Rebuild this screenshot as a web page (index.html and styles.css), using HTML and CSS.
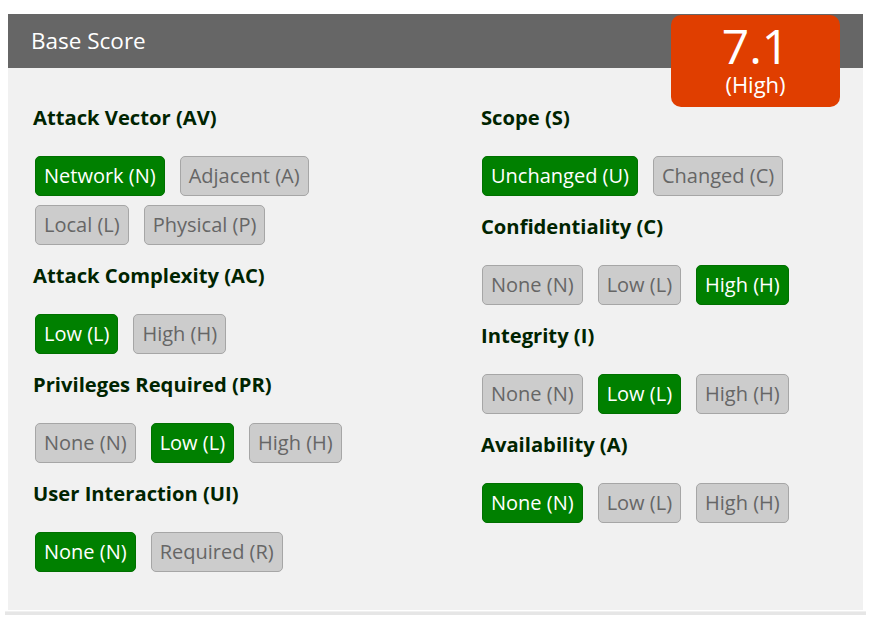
FILE: index.html
```html
<!DOCTYPE html>
<html>
<head>
<meta charset="utf-8">
<link rel="stylesheet" href="styles.css">
</head>
<body>
<div class="panel">
  <div class="header">Base Score</div>
  <div class="badge"><div class="score">7.1</div><div class="sev">(High)</div></div>
  <div class="body">
    <div class="col">
      <div class="metric">
        <h3>Attack Vector (AV)</h3>
        <div class="opts">
          <span class="btn on">Network (N)</span><span class="btn">Adjacent (A)</span><span class="btn">Local (L)</span><span class="btn">Physical (P)</span>
        </div>
      </div>
      <div class="metric">
        <h3>Attack Complexity (AC)</h3>
        <div class="opts"><span class="btn on">Low (L)</span><span class="btn">High (H)</span></div>
      </div>
      <div class="metric">
        <h3>Privileges Required (PR)</h3>
        <div class="opts"><span class="btn">None (N)</span><span class="btn on">Low (L)</span><span class="btn">High (H)</span></div>
      </div>
      <div class="metric">
        <h3>User Interaction (UI)</h3>
        <div class="opts"><span class="btn on">None (N)</span><span class="btn">Required (R)</span></div>
      </div>
    </div>
    <div class="col col-right">
      <div class="metric">
        <h3>Scope (S)</h3>
        <div class="opts"><span class="btn on">Unchanged (U)</span><span class="btn">Changed (C)</span></div>
      </div>
      <div class="metric">
        <h3>Confidentiality (C)</h3>
        <div class="opts"><span class="btn">None (N)</span><span class="btn">Low (L)</span><span class="btn on">High (H)</span></div>
      </div>
      <div class="metric">
        <h3>Integrity (I)</h3>
        <div class="opts"><span class="btn">None (N)</span><span class="btn on">Low (L)</span><span class="btn">High (H)</span></div>
      </div>
      <div class="metric">
        <h3>Availability (A)</h3>
        <div class="opts"><span class="btn on">None (N)</span><span class="btn">Low (L)</span><span class="btn">High (H)</span></div>
      </div>
    </div>
  </div>
</div>
<div class="rule"></div>
</body>
</html>
```

FILE: styles.css
```css
html, body {
  margin: 0;
  padding: 0;
  background: #fff;
  font-family: "Open Sans", "Liberation Sans", sans-serif;
}
body {
  padding-top: 14px;
}
.panel {
  position: relative;
  margin: 0 17px 0 8px;
  background: #f1f1f1;
}
.header {
  height: 54px;
  line-height: 54px;
  background: #666;
  color: #fff;
  font-size: 22.5px;
  padding-left: 23px;
}
.badge {
  position: absolute;
  top: 1px;
  right: 23px;
  width: 169px;
  height: 92px;
  background: #e03e00;
  border-radius: 10px;
  color: #fff;
  text-align: center;
}
.score {
  font-size: 48px;
  line-height: 48px;
  padding-top: 7px;
}
.sev {
  font-size: 22px;
  line-height: 24px;
  margin-top: 2px;
}
.body {
  display: grid;
  grid-template-columns: 448px 1fr;
  padding: 35px 25px 38px 25px;
}
.metric + .metric {
  margin-top: 16px;
}
h3 {
  margin: 0 0 25px 0;
  font-size: 20.2px;
  line-height: 28px;
  font-weight: 700;
  color: #002400;
}
.opts {
  display: flex;
  flex-wrap: wrap;
  gap: 9px 15px;
  padding-left: 2px;
  max-width: 370px;
}
.col-right .opts {
  padding-left: 1px;
}
.btn {
  display: block;
  box-sizing: border-box;
  height: 40px;
  line-height: 38px;
  padding: 0 8px;
  font-size: 20px;
  border: 1px solid #a6a6a6;
  border-radius: 5px;
  background: #ccc;
  color: #666;
}
.btn.on {
  background: #008000;
  border-color: #007000;
  color: #fff;
}
.rule {
  margin: 1px 14px 0 5px;
  height: 3px;
  background: #e6e6e6;
  border-top: 1px solid #f0f0f0;
}
```
